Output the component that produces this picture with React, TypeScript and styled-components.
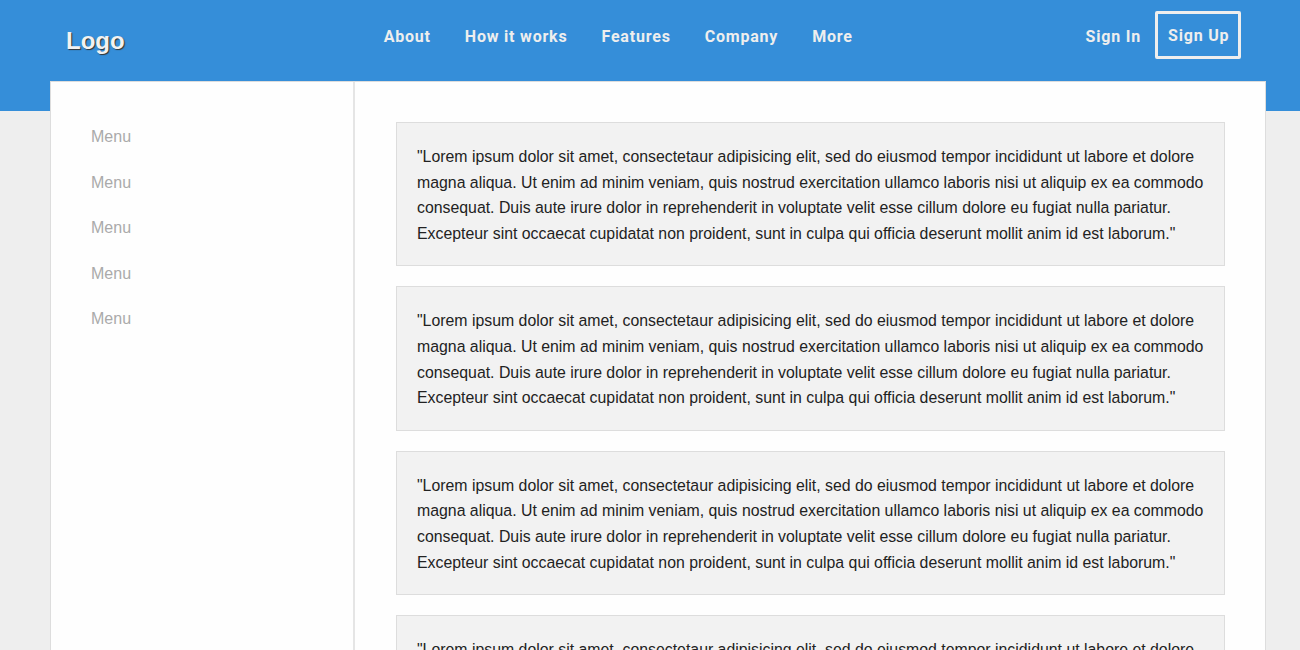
import styled, { createGlobalStyle } from 'styled-components';

const GlobalStyle = createGlobalStyle`
  * { box-sizing: border-box; }
  body {
    margin: 0;
    background: #eeeeee;
    font-family: "Liberation Sans", Arial, sans-serif;
    color: #222;
  }
`;

const navLinks = ['About', 'How it works', 'Features', 'Company', 'More'];
const lorem =
  '"Lorem ipsum dolor sit amet, consectetaur adipisicing elit, sed do eiusmod tempor incididunt ut labore et dolore magna aliqua. Ut enim ad minim veniam, quis nostrud exercitation ullamco laboris nisi ut aliquip ex ea commodo consequat. Duis aute irure dolor in reprehenderit in voluptate velit esse cillum dolore eu fugiat nulla pariatur. Excepteur sint occaecat cupidatat non proident, sunt in culpa qui officia deserunt mollit anim id est laborum."';

const App = () => {
  return (
    <>
      <GlobalStyle />
      <Header>
        <Logo>Logo</Logo>
        <Nav>
          {navLinks.map((l) => (
            <NavLink key={l}>{l}</NavLink>
          ))}
        </Nav>
        <Actions>
          <NavLink>Sign In</NavLink>
          <SignUp>Sign Up</SignUp>
        </Actions>
      </Header>
      <Panel>
        <Sidebar>
          {[1, 2, 3, 4, 5].map((i) => (
            <MenuItem key={i}>Menu</MenuItem>
          ))}
        </Sidebar>
        <Content>
          {[1, 2, 3, 4].map((i) => (
            <Card key={i}>{lorem}</Card>
          ))}
        </Content>
      </Panel>
    </>
  );
};

export default App;

const Header = styled.header`
  display: flex;
  align-items: flex-start;
  height: 111px;
  background: #358ed9;
  padding: 11px 59px 0 66px;
`;

const Logo = styled.div`
  font-family: "Liberation Sans", Arial, sans-serif;
  font-weight: bold;
  font-size: 24px;
  line-height: 60px;
  color: #f2f2f2;
  text-shadow: 1px 1px 1px #333;
`;

const Nav = styled.nav`
  display: flex;
  margin-left: 242px;
`;

const NavLink = styled.a`
  display: block;
  padding: 0 17px;
  font-family: Roboto, "Liberation Sans", sans-serif;
  font-weight: bold;
  font-size: 16px;
  letter-spacing: 0.8px;
  line-height: 51px;
  color: #eeeeee;
  cursor: pointer;
`;

const Actions = styled.div`
  display: flex;
  margin-left: auto;
`;

const SignUp = styled(NavLink)`
  padding: 0 0 0 10px;
  width: 86px;
  height: 48px;
  line-height: 43px;
  border: 3px solid #eeeeee;
  border-radius: 2px;
  margin-left: -3px;
  white-space: nowrap;
`;

const Panel = styled.main`
  display: flex;
  margin: -30px 34px 0 50px;
  background: #fefefe;
  border: 1px solid #dddddd;
  border-bottom: none;
  min-height: 600px;
`;

const Sidebar = styled.aside`
  width: 304px;
  flex-shrink: 0;
  border-right: 2px solid #e5e5e5;
  padding: 32px 40px;
`;

const MenuItem = styled.div`
  font-size: 16px;
  line-height: 25.6px;
  padding: 10px 0;
  color: #aaaaaa;
`;

const Content = styled.section`
  flex: 1;
  display: flex;
  flex-direction: column;
  gap: 20px;
  padding: 40px 40px 0 41px;
`;

const Card = styled.div`
  background: #f2f2f2;
  border: 1px solid #dddddd;
  padding: 21px 20px 19px;
  font-size: 15.85px;
  line-height: 25.6px;
  color: #222;
`;
